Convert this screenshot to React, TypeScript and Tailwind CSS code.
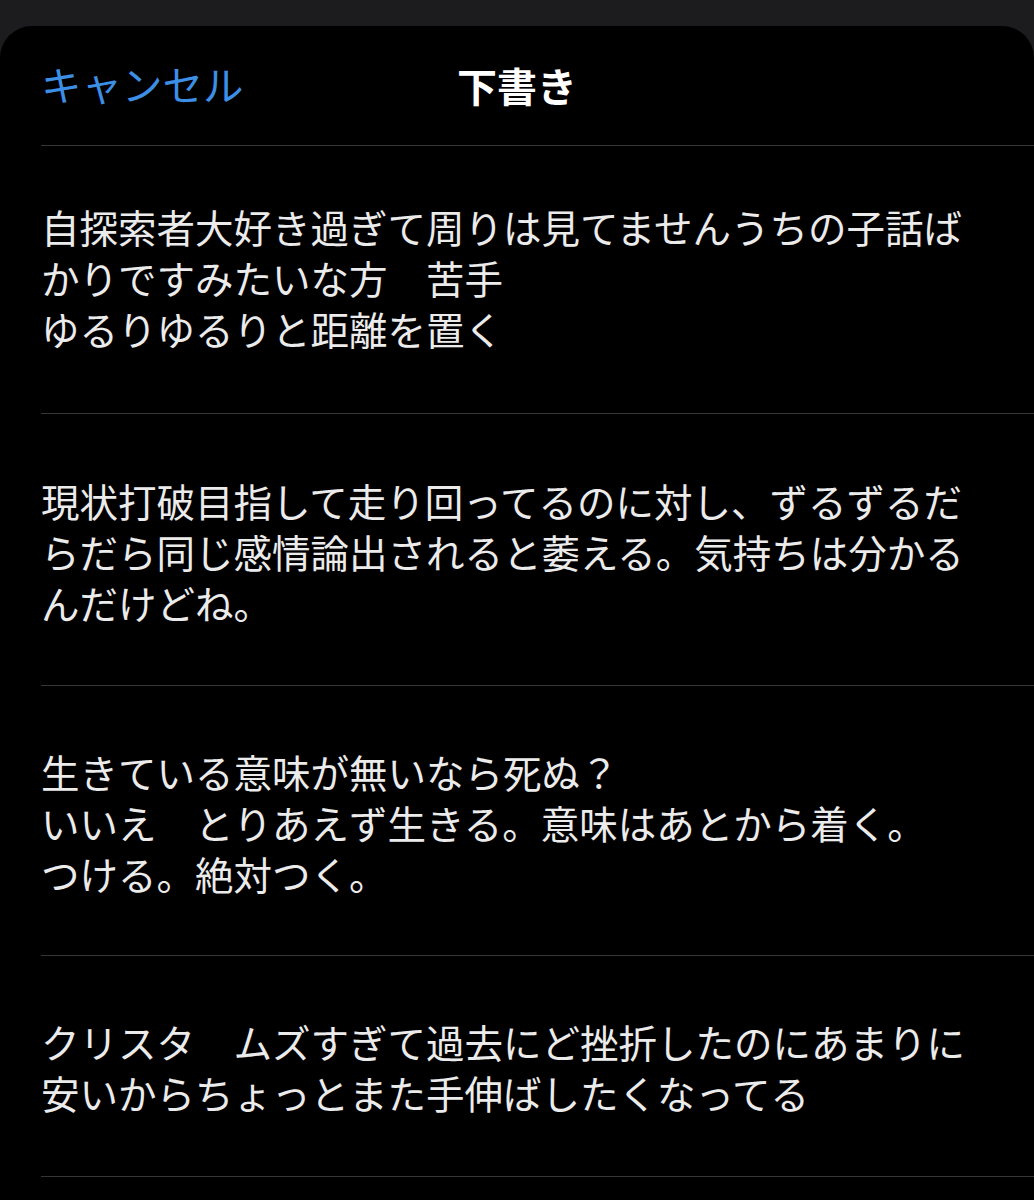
import React from "react";

const drafts: { text: string; pad: string }[] = [
  {
    text: "自探索者大好き過ぎて周りは見てませんうちの子話ば\nかりですみたいな方　苦手\nゆるりゆるりと距離を置く",
    pad: "pt-[55px] pb-[59px]",
  },
  {
    text: "現状打破目指して走り回ってるのに対し、ずるずるだ\nらだら同じ感情論出されると萎える。気持ちは分かる\nんだけどね。",
    pad: "pt-[61px] pb-[57px]",
  },
  {
    text: "生きている意味が無いなら死ぬ？\nいいえ　とりあえず生きる。意味はあとから着く。\nつける。絶対つく。",
    pad: "pt-[60px] pb-[56px]",
  },
  {
    text: "クリスタ　ムズすぎて過去にど挫折したのにあまりに\n安いからちょっとまた手伸ばしたくなってる",
    pad: "pt-[60px] pb-[58px]",
  },
];

export default function App() {
  return (
    <div
      className="min-h-[1200px] bg-[#1c1c1e] pt-[26px]"
      style={{ fontFamily: '"Noto Sans CJK JP", "Noto Sans", sans-serif' }}
    >
      <div className="min-h-[1174px] rounded-t-[32px] bg-black">
        <div className="grid h-[119px] grid-cols-[1fr_auto_1fr] items-center px-[41px] pb-[2px]">
          <button className="justify-self-start text-[40.5px] leading-none text-[#3d8fe6]">
            キャンセル
          </button>
          <div className="text-[40px] font-bold leading-none text-white">下書き</div>
          <div />
        </div>
        <div className="ml-[41px] h-px bg-[#363638]" />
        {drafts.map((d, i) => (
          <div
            key={i}
            className={`ml-[41px] whitespace-pre-line border-b border-[#363638] pr-[40px] text-[38.5px] leading-[51px] text-[#ebebeb] ${d.pad}`}
          >
            {d.text}
          </div>
        ))}
      </div>
    </div>
  );
}
